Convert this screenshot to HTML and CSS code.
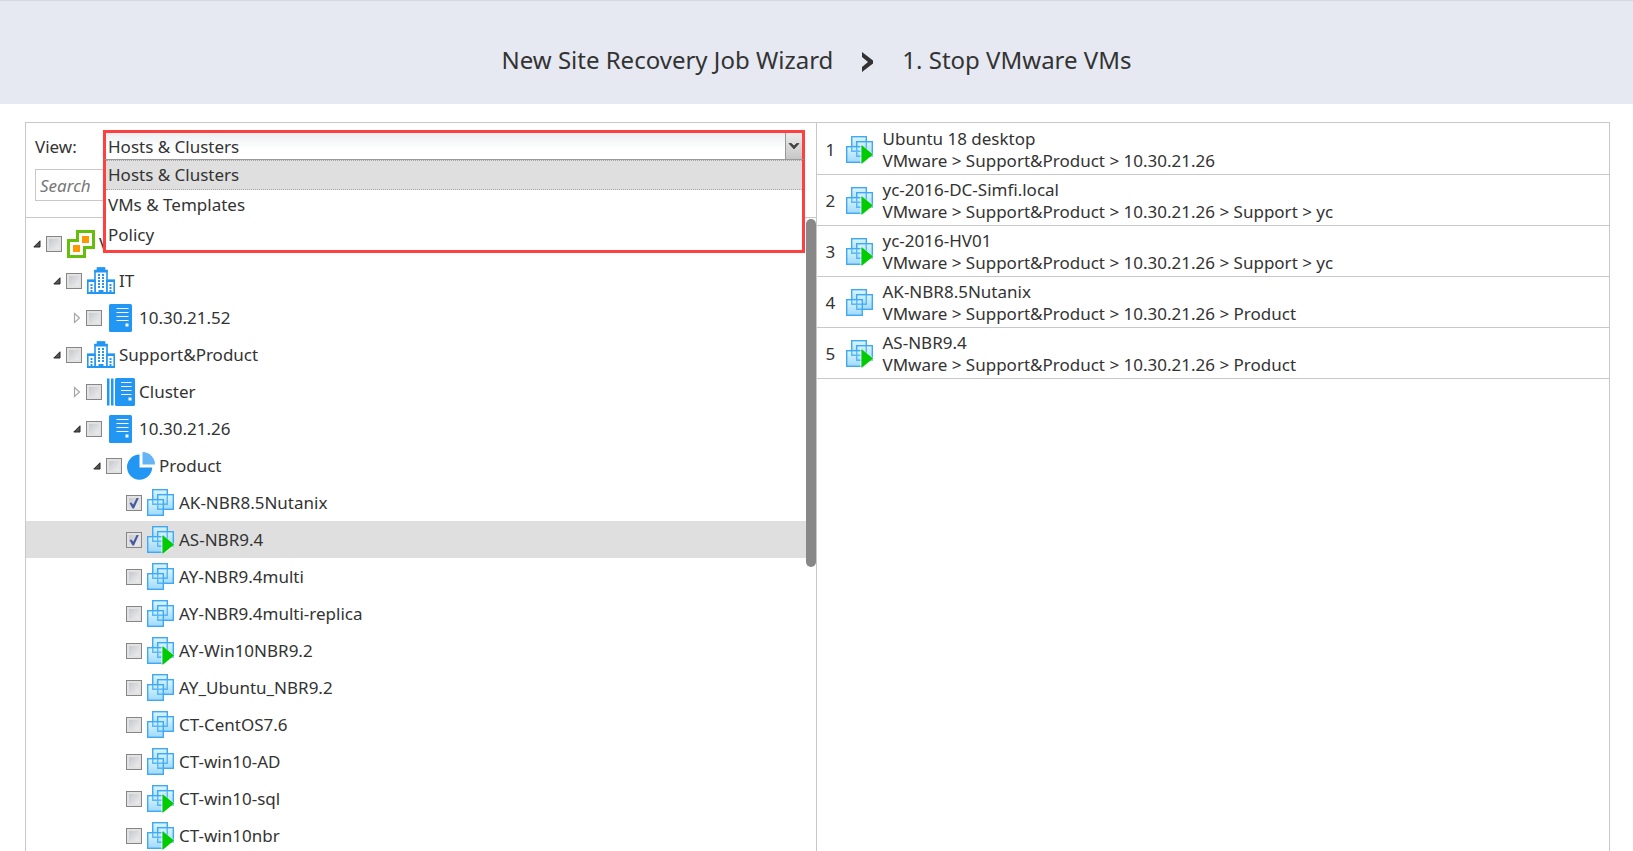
FILE: index.html
```html
<!DOCTYPE html>
<html lang="en">
<head>
<meta charset="utf-8">
<title>New Site Recovery Job Wizard</title>
<link rel="stylesheet" href="styles.css">
</head>
<body>
<svg class="sprite" aria-hidden="true">
  <defs>
    <linearGradient id="sky" x1="0" y1="0" x2="0" y2="1">
      <stop offset="0" stop-color="#d6f5ff"/>
      <stop offset="1" stop-color="#8fd3fb"/>
    </linearGradient>
    <symbol id="i-vm" viewBox="0 0 28 28">
      <g fill="url(#sky)" fill-opacity=".85" stroke="#3fa9f5" stroke-width="1.400">
        <rect x="5.700" y=".7" width="14.600" height="14.600"/>
        <rect x="10.700" y="5.700" width="15.600" height="14.600"/>
        <rect x=".7" y="10.700" width="15.600" height="15.600"/>
      </g>
      <path d="M5.700 10.700v4.600h14.600V5.700M10.700 10.700v9.600h5.600" fill="none" stroke="#3fa9f5" stroke-opacity=".75" stroke-width="1.400"/>
    </symbol>
    <symbol id="i-vm-on" viewBox="0 0 28 28">
      <use href="#i-vm" width="28" height="28"/>
      <path d="M14 7.500 27 17.500v3L16.500 28H14z" fill="#fff" fill-opacity=".45"/>
      <path d="M15.500 9 27 18.500 15.500 28z" fill="#0c0"/>
    </symbol>
    <symbol id="i-vcenter" viewBox="0 0 28 28">
      <path d="M10.500 1.500H26.500V17.500H17.500V26.500H1.500V10.500H10.500z" fill="#fff" stroke="#64bf0a" stroke-width="3"/>
      <path d="M15 6h7v7h-7zM6 15h7v7H6z" fill="#ff9800"/>
    </symbol>
    <symbol id="i-dc" viewBox="0 0 28 28">
      <g fill="#fff" stroke="#2196f3" stroke-width="1.600">
        <path d="M8 26V3.500h2.500V1h7v2.500H20V26"/>
        <path d="M.8 26V13.500H8V26zM20 26V13.500h7.200V26z"/>
      </g>
      <path d="M7.500 3h13v2.500h-13zM10.500 .5h7v3h-7zM0 12.500h8v2.500H0zM20 12.500h8v2.500h-8zM0 25h28v2H0z" fill="#2196f3"/>
      <path d="M12 7v14M16 7v14M4.500 17v8M23.500 17v8" stroke="#2196f3" stroke-width="2" stroke-dasharray="2 1"/>
      <path d="M11.500 23h5v4h-5z" fill="#2196f3"/>
    </symbol>
    <symbol id="i-host" viewBox="0 0 28 28">
      <rect x="2" width="23" height="28" rx="1.500" fill="#2196f3"/>
      <path d="M9.500 4.500h12M9.500 8.500h12M9.500 12.500h12M9.500 16.500h12" stroke="#fff" stroke-width="1.200"/>
      <path d="M18.500 19.500h3v3h-3z" fill="#fff"/>
    </symbol>
    <symbol id="i-cluster" viewBox="0 0 28 28">
      <path d="M0 .5h2.500v27H0zM4 .5h2.500v27H4z" fill="#2196f3"/>
      <rect x="8" width="20" height="28" rx="1.500" fill="#2196f3"/>
      <path d="M14 4.500h10.500M14 8.500h10.500M14 12.500h10.500M14 16.500h10.500" stroke="#fff" stroke-width="1.200"/>
      <path d="M21.500 19.500h3v3h-3z" fill="#fff"/>
    </symbol>
    <symbol id="i-pool" viewBox="0 0 28 28">
      <path d="M12.500 2.500v13h12.700A12.600 12.600 0 1 1 12.500 2.500z" fill="#2196f3"/>
      <path d="M15.500 0A12.500 12.500 0 0 1 28 12.500H15.500z" fill="#64b5f6"/>
    </symbol>
    <symbol id="i-open" viewBox="0 0 8 8">
      <path d="M7 .8V7H.8z" fill="#555" stroke="#262626"/>
    </symbol>
    <symbol id="i-closed" viewBox="0 0 8 12">
      <path d="M1.500 1.500 6.500 6 1.500 10.500z" fill="#fff" stroke="#a6a6a6" stroke-width="1.200"/>
    </symbol>
  </defs>
</svg>

<header class="wizard-header">
  <h1 class="wizard-title">New Site Recovery Job Wizard</h1>
  <svg class="wizard-sep" viewBox="0 0 12 20" aria-hidden="true"><path d="M.5 0 11.500 8.500v3L.5 20v-5L6.500 10 .5 5z" fill="#333"/></svg>
  <h2 class="wizard-title">1. Stop VMware VMs</h2>
</header>

<main class="panel">
  <section class="source" aria-label="Inventory">
    <div class="filters">
      <div class="view-row">
        <label class="view-label" for="view">View:</label>
        <div class="combo">
          <div class="combo-box">
            <select class="combo-select" id="view">
              <option>Hosts &amp; Clusters</option>
              <option>VMs &amp; Templates</option>
              <option>Policy</option>
            </select>
            <span class="combo-trigger"><svg class="combo-arrow" viewBox="0 0 12 8" aria-hidden="true"><path d="M1 1.500h2.500L6 4l2.500-2.500H11L6 7z" fill="#444" stroke="#444" stroke-width=".8"/></svg></span>
          </div>
          <ul class="combo-list" role="listbox" aria-label="View">
            <li class="combo-option is-active" role="option" aria-selected="true">Hosts &amp; Clusters</li>
            <li class="combo-option" role="option">VMs &amp; Templates</li>
            <li class="combo-option" role="option">Policy</li>
          </ul>
        </div>
      </div>
      <input class="search" type="text" placeholder="Search" aria-label="Search">
    </div>
    <div class="tree-area">
      <ul class="tree">
        <li class="node level-0"><svg class="toggle"><use href="#i-open"/></svg><label class="item"><input class="check" type="checkbox"><svg class="icon"><use href="#i-vcenter"/></svg>VMware</label></li>
        <li class="node level-1"><svg class="toggle"><use href="#i-open"/></svg><label class="item"><input class="check" type="checkbox"><svg class="icon"><use href="#i-dc"/></svg>IT</label></li>
        <li class="node level-2"><svg class="toggle closed"><use href="#i-closed"/></svg><label class="item"><input class="check" type="checkbox"><svg class="icon"><use href="#i-host"/></svg>10.30.21.52</label></li>
        <li class="node level-1"><svg class="toggle"><use href="#i-open"/></svg><label class="item"><input class="check" type="checkbox"><svg class="icon"><use href="#i-dc"/></svg>Support&amp;Product</label></li>
        <li class="node level-2"><svg class="toggle closed"><use href="#i-closed"/></svg><label class="item"><input class="check" type="checkbox"><svg class="icon"><use href="#i-cluster"/></svg>Cluster</label></li>
        <li class="node level-2"><svg class="toggle"><use href="#i-open"/></svg><label class="item"><input class="check" type="checkbox"><svg class="icon"><use href="#i-host"/></svg>10.30.21.26</label></li>
        <li class="node level-3"><svg class="toggle"><use href="#i-open"/></svg><label class="item"><input class="check" type="checkbox"><svg class="icon"><use href="#i-pool"/></svg>Product</label></li>
        <li class="node level-4"><span class="toggle"></span><label class="item"><input class="check" type="checkbox" checked><svg class="icon"><use href="#i-vm"/></svg>AK-NBR8.5Nutanix</label></li>
        <li class="node level-4 is-selected"><span class="toggle"></span><label class="item"><input class="check" type="checkbox" checked><svg class="icon"><use href="#i-vm-on"/></svg>AS-NBR9.4</label></li>
        <li class="node level-4"><span class="toggle"></span><label class="item"><input class="check" type="checkbox"><svg class="icon"><use href="#i-vm"/></svg>AY-NBR9.4multi</label></li>
        <li class="node level-4"><span class="toggle"></span><label class="item"><input class="check" type="checkbox"><svg class="icon"><use href="#i-vm"/></svg>AY-NBR9.4multi-replica</label></li>
        <li class="node level-4"><span class="toggle"></span><label class="item"><input class="check" type="checkbox"><svg class="icon"><use href="#i-vm-on"/></svg>AY-Win10NBR9.2</label></li>
        <li class="node level-4"><span class="toggle"></span><label class="item"><input class="check" type="checkbox"><svg class="icon"><use href="#i-vm"/></svg>AY_Ubuntu_NBR9.2</label></li>
        <li class="node level-4"><span class="toggle"></span><label class="item"><input class="check" type="checkbox"><svg class="icon"><use href="#i-vm"/></svg>CT-CentOS7.6</label></li>
        <li class="node level-4"><span class="toggle"></span><label class="item"><input class="check" type="checkbox"><svg class="icon"><use href="#i-vm"/></svg>CT-win10-AD</label></li>
        <li class="node level-4"><span class="toggle"></span><label class="item"><input class="check" type="checkbox"><svg class="icon"><use href="#i-vm-on"/></svg>CT-win10-sql</label></li>
        <li class="node level-4"><span class="toggle"></span><label class="item"><input class="check" type="checkbox"><svg class="icon"><use href="#i-vm-on"/></svg>CT-win10nbr</label></li>
      </ul>
      <div class="scrollbar"><div class="thumb"></div></div>
    </div>
  </section>

  <ol class="picked" aria-label="Selected VMs">
    <li class="vm"><span class="num">1</span><svg class="icon"><use href="#i-vm-on"/></svg><div class="vm-text"><div>Ubuntu 18 desktop</div><div>VMware &gt; Support&amp;Product &gt; 10.30.21.26</div></div></li>
    <li class="vm"><span class="num">2</span><svg class="icon"><use href="#i-vm-on"/></svg><div class="vm-text"><div>yc-2016-DC-Simfi.local</div><div>VMware &gt; Support&amp;Product &gt; 10.30.21.26 &gt; Support &gt; yc</div></div></li>
    <li class="vm"><span class="num">3</span><svg class="icon"><use href="#i-vm-on"/></svg><div class="vm-text"><div>yc-2016-HV01</div><div>VMware &gt; Support&amp;Product &gt; 10.30.21.26 &gt; Support &gt; yc</div></div></li>
    <li class="vm"><span class="num">4</span><svg class="icon"><use href="#i-vm"/></svg><div class="vm-text"><div>AK-NBR8.5Nutanix</div><div>VMware &gt; Support&amp;Product &gt; 10.30.21.26 &gt; Product</div></div></li>
    <li class="vm"><span class="num">5</span><svg class="icon"><use href="#i-vm-on"/></svg><div class="vm-text"><div>AS-NBR9.4</div><div>VMware &gt; Support&amp;Product &gt; 10.30.21.26 &gt; Product</div></div></li>
  </ol>
</main>
</body>
</html>
```
FILE: styles.css
```css
* {
  box-sizing: border-box;
}

body {
  margin: 0;
  height: 100vh;
  overflow: hidden;
  display: flex;
  flex-direction: column;
  background: #fff;
  color: #333;
  font-family: Tahoma, "Noto Sans", sans-serif;
  font-size: 17px;
  line-height: 22px;
}

ul,
ol {
  margin: 0;
  padding: 0;
  list-style: none;
}

.sprite {
  position: absolute;
  width: 0;
  height: 0;
}

.wizard-header {
  flex: none;
  display: flex;
  align-items: center;
  justify-content: center;
  gap: 28px;
  padding: 41px 24px 27px;
  border-top: 1px solid #d6dade;
  background: #e6e9f1;
}

.wizard-title {
  margin: 0;
  font-size: 24px;
  font-weight: 400;
  line-height: 35px;
}

.wizard-sep {
  width: 13px;
  height: 20px;
  margin-top: 4px;
}

.panel {
  flex: 1;
  min-height: 0;
  display: flex;
  margin: 18px 23px 0 25px;
  border: 1px solid #c8c8c8;
  border-bottom: 0;
}

.picked {
  flex: 1;
  min-width: 0;
  padding-top: 1px;
}

.source {
  flex: none;
  width: calc(50% - 1px);
  display: flex;
  flex-direction: column;
  border-right: 1px solid #c8c8c8;
}

.filters {
  flex: none;
  padding: 7px 11px 16px 9px;
  border-bottom: 1px solid #c8c8c8;
}

.view-row {
  display: flex;
  align-items: center;
  height: 32px;
  margin-bottom: 7px;
}

.view-label {
  width: 68px;
  padding-top: 2px;
}

.combo {
  position: relative;
  z-index: 2;
  flex: 1;
  align-self: flex-start;
  height: 32px;
}

.combo-box {
  position: relative;
  display: flex;
  height: 30px;
  border: 3px solid #ff4040;
  border-bottom: 1px solid #999;
  background: linear-gradient(#eceff0, #fff 16px);
}

.combo-select {
  appearance: none;
  flex: 1;
  min-width: 0;
  padding: 1px 2px 0;
  border: 0;
  background: none;
  color: inherit;
  font: inherit;
  line-height: 25px;
  outline: 0;
}

.combo-trigger {
  display: flex;
  align-items: center;
  justify-content: center;
  width: 17px;
  border-left: 1px solid #999;
  background: linear-gradient(#ececec, #c6c6c6);
  pointer-events: none;
}

.combo-arrow {
  width: 12px;
  height: 8px;
}

.combo-list {
  position: absolute;
  top: 30px;
  left: 0;
  right: 0;
  border: 3px solid #ff4040;
  border-top: 0;
  background: #fff;
}

.combo-option {
  padding: 4px 2px;
  line-height: 22px;
}

.combo-option.is-active {
  border-top: 1px dotted #a6a6a6;
  border-bottom: 1px dotted #a6a6a6;
  padding: 3px 2px;
  background: #dfdfdf;
}

.search {
  display: block;
  width: 100%;
  height: 32px;
  padding: 0 4px;
  border: 1px solid #c8c8c8;
  background: #fff;
  color: inherit;
  font: inherit;
}

.search::placeholder {
  color: #777;
  font-style: italic;
  opacity: 1;
}

.tree-area {
  flex: 1;
  min-height: 0;
  display: flex;
}

.tree {
  flex: 1;
  min-width: 0;
  padding-top: 7px;
  overflow: hidden;
}

.node {
  display: flex;
  align-items: center;
  height: 37px;
  padding-left: 7px;
}

.level-1 {
  padding-left: 27px;
}

.level-2 {
  padding-left: 47px;
}

.level-3 {
  padding-left: 67px;
}

.level-4 {
  padding-left: 87px;
}

.is-selected {
  background: #dfdfdf;
}

.toggle {
  flex: none;
  width: 8px;
  height: 8px;
  margin-right: 5px;
}

.toggle.closed {
  height: 12px;
}

.item {
  display: flex;
  align-items: center;
}

.check {
  appearance: none;
  display: flex;
  align-items: center;
  justify-content: center;
  width: 16px;
  height: 16px;
  margin: 1px 5px 0 0;
  border: 1px solid #868686;
  background: linear-gradient(135deg, #bfc1c7, #f4f4f5);
  box-shadow: inset 0 0 0 2px #e2e2e2;
}

.check:checked::before {
  content: "";
  width: 10px;
  height: 11px;
  background: #4659a0;
  clip-path: polygon(5% 50%, 25% 45%, 42% 65%, 78% 0, 100% 0, 50% 100%, 35% 100%);
}

.icon {
  flex: none;
  width: 28px;
  height: 28px;
  margin-right: 4px;
}

.scrollbar {
  flex: none;
  width: 10px;
  padding-top: 1px;
}

.thumb {
  height: 55%;
  border-radius: 5px;
  background: #888;
}

.vm {
  display: flex;
  align-items: center;
  padding: 4px 9px 2px;
  border-bottom: 1px solid #c8c8c8;
}

.num {
  width: 20px;
}

.vm .icon {
  margin-right: 9px;
}
```
